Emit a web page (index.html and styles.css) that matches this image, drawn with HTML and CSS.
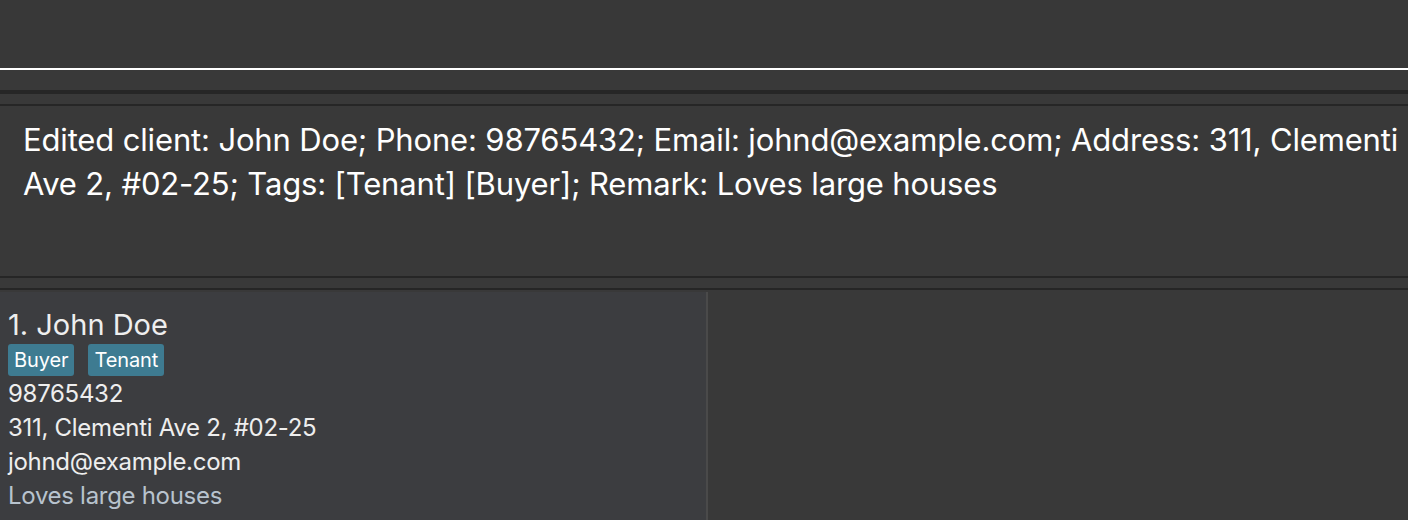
FILE: index.html
```html
<!DOCTYPE html>
<html>
<head>
<meta charset="utf-8">
<link rel="stylesheet" href="styles.css">
</head>
<body>
<div class="app">
  <div class="menubar"></div>
  <div class="command-box"></div>
  <div class="sep"></div>
  <div class="result">
    <p class="result-text">Edited client: John Doe; Phone: 98765432; Email: johnd@example.com; Address: 311, Clementi Ave 2, #02-25; Tags: [Tenant] [Buyer]; Remark: Loves large houses</p>
  </div>
  <div class="gap-bar"></div>
  <div class="main">
    <div class="list">
      <div class="card">
        <div class="name">1. John Doe</div>
        <div class="tags"><span class="tag">Buyer</span><span class="tag">Tenant</span></div>
        <div class="field">98765432</div>
        <div class="field">311, Clementi Ave 2, #02-25</div>
        <div class="field">johnd@example.com</div>
        <div class="field remark">Loves large houses</div>
      </div>
    </div>
    <div class="detail"></div>
  </div>
</div>
</body>
</html>
```

FILE: styles.css
```css
html, body {
  margin: 0;
  padding: 0;
  background: #393939;
  font-family: Inter, "Noto Sans", sans-serif;
  overflow: hidden;
}
.app {
  width: 1408px;
  height: 520px;
  display: flex;
  flex-direction: column;
}
.menubar {
  height: 68px;
  background: #383838;
  border-bottom: 2px solid #ffffff;
  flex: none;
}
.command-box {
  height: 20px;
  background: #393939;
  border-bottom: 4px solid #262626;
  flex: none;
}
.sep {
  height: 10px;
  background: #393939;
  border-bottom: 2px solid #262626;
  flex: none;
}
.result {
  height: 172px;
  background: #393939;
  border-bottom: 2px solid #262626;
  flex: none;
  padding: 0 0 0 23px;
  box-sizing: border-box;
}
.result-text {
  margin: 12px 0 0 0;
  color: #ffffff;
  font-size: 31px;
  line-height: 44px;
  letter-spacing: -0.15px;
  width: 1385px;
}
.gap-bar {
  height: 10px;
  background: #393939;
  border-bottom: 2px solid #262626;
  flex: none;
}
.main {
  flex: 1;
  display: flex;
  padding-top: 2px;
}
.list {
  width: 706px;
  background: #3c3d40;
  border-right: 2px solid #4a4a4a;
}
.detail {
  flex: 1;
  background: #393939;
}
.card {
  padding: 15px 0 0 8px;
  color: #eeeeee;
}
.name {
  font-size: 29px;
  line-height: 36px;
  letter-spacing: 0;
}
.tags {
  display: flex;
  gap: 14px;
  margin: 1px 0 1px 0;
}
.tag {
  background: #3e7b91;
  color: #ffffff;
  font-size: 20px;
  line-height: 32px;
  padding: 0 6px;
  border-radius: 3px;
  letter-spacing: -0.1px;
}
.field {
  font-size: 24px;
  line-height: 34px;
  letter-spacing: -0.3px;
}
.remark {
  color: #b8c3ce;
}
```
